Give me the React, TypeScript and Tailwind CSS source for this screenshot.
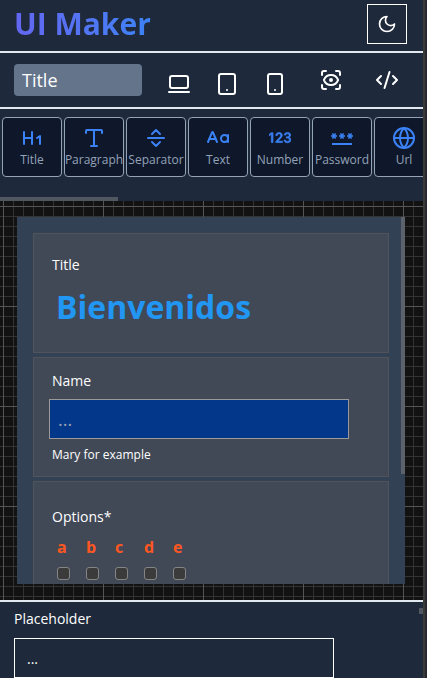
import type { ReactNode } from "react";
import {
  CaseSensitive,
  CodeXml,
  Globe,
  Heading1,
  LaptopMinimal,
  ScanEye,
  Smartphone,
  Tablet,
  Type,
} from "lucide-react";
import { Bs123 } from "react-icons/bs";
import { MdPassword } from "react-icons/md";
import { TbSeparatorHorizontal } from "react-icons/tb";

const tools: { name: string; icon: ReactNode }[] = [
  { name: "Title", icon: <Heading1 size={24} /> },
  { name: "Paragraph", icon: <Type size={24} /> },
  { name: "Separator", icon: <TbSeparatorHorizontal size={24} /> },
  { name: "Text", icon: <CaseSensitive size={24} /> },
  { name: "Number", icon: <Bs123 size={24} className="p-px" strokeWidth={0.5} /> },
  { name: "Password", icon: <MdPassword size={24} /> },
  { name: "Url", icon: <Globe size={24} /> },
];

const options = ["a", "b", "c", "d", "e"];

function Moon() {
  return (
    <svg width="20" height="20" viewBox="0 0 24 24" fill="none" stroke="currentColor" strokeWidth="2" strokeLinecap="round" strokeLinejoin="round">
      <path d="M12 3a6 6 0 0 0 9 9 9 9 0 1 1-9-9Z" />
    </svg>
  );
}

function Card({ children }: { children: ReactNode }) {
  return (
    <section className="h-[120px] shrink-0 border border-[#50525c] bg-[#414856] px-[15px] pt-[11px]">
      {children}
    </section>
  );
}

export default function App() {
  return (
    <div className="flex h-screen bg-[#2a2730] font-['Open_Sans','Noto_Sans',sans-serif] text-white">
      <div className="mr-0.5 flex min-w-0 flex-1 flex-col border-r-2 border-[#3a3a38] bg-[#1e293b]">
        <header className="flex h-[53px] shrink-0 items-start justify-between border-b-2 border-[#e2e8f0] pr-4 pl-3.5">
          <h1 className="bg-linear-to-r from-[#6366f1] to-[#3b82f6] bg-clip-text pt-1 text-3xl leading-10 font-bold text-transparent">
            UI Maker
          </h1>
          <button aria-label="Dark mode" className="mt-1 flex size-10 items-center justify-center border border-white">
            <Moon />
          </button>
        </header>

        <div className="flex h-14 shrink-0 items-center border-b-2 border-[#e2e8f0] pl-3.5">
          <input
            aria-label="Form name"
            defaultValue="Title"
            className="h-8 w-32 rounded-sm bg-[#64748b] px-2 text-lg leading-7 text-white"
          />
          <div className="ml-[25px] flex gap-6 pt-2">
            <button aria-label="Laptop"><LaptopMinimal size={24} /></button>
            <button aria-label="Tablet"><Tablet size={24} /></button>
            <button aria-label="Phone"><Smartphone size={24} /></button>
          </div>
          <div className="ml-8 flex gap-8">
            <button aria-label="Preview"><ScanEye size={24} /></button>
            <button aria-label="Code"><CodeXml size={24} /></button>
          </div>
        </div>

        <nav className="relative flex h-[92px] shrink-0 items-start gap-0.5 overflow-hidden pt-2 pl-0.5">
          {tools.map((tool) => (
            <button
              key={tool.name}
              className="flex size-[60px] shrink-0 flex-col items-center justify-center rounded-sm border border-[#94a3b8] bg-[#0f172a] pt-0.5 text-xs leading-5 text-[#94a3b8]"
            >
              <span className="text-[#3b82f6]">{tool.icon}</span>
              {tool.name}
            </button>
          ))}
          <div className="absolute bottom-0 left-0 h-1 w-[118px] bg-[#505761]" />
        </nav>

        <main className="relative flex min-h-0 flex-1 bg-[#121212] py-4 pr-[18px] pl-[17px]">
          <svg className="absolute inset-0 size-full" aria-hidden="true">
            <defs>
              <pattern id="minor" width="10" height="10" x="3" y="5" patternUnits="userSpaceOnUse">
                <path d="M0 0h10v1H1v9H0z" fill="#333333" />
              </pattern>
              <pattern id="major" width="100" height="100" x="3" y="5" patternUnits="userSpaceOnUse">
                <path d="M0 0h100v1H1v99H0z" fill="#555555" />
              </pattern>
            </defs>
            <rect width="100%" height="100%" fill="url(#minor)" />
            <rect width="100%" height="100%" fill="url(#major)" />
          </svg>
          <div className="relative flex min-w-0 flex-1 flex-col gap-1 overflow-hidden bg-[#334155] p-4">
            <Card>
              <p className="pt-2 pl-[3px] text-sm leading-6">Title</p>
              <h2 className="mt-2 pl-[7px] text-[32px] leading-[44px] font-bold text-[#2196f3]">Bienvenidos</h2>
            </Card>
            <Card>
              <label htmlFor="name" className="block h-[30px] pl-[3px] text-sm leading-6">
                Name
              </label>
              <input
                id="name"
                placeholder="..."
                className="block h-10 w-[300px] border border-[#999999] bg-[#02378a] px-2 text-lg text-white placeholder:text-[#9ca3af]"
              />
              <p className="pt-1 pl-[3px] text-xs leading-6">Mary for example</p>
            </Card>
            <Card>
              <p className="pt-3 pl-[3px] text-sm leading-6">Options*</p>
              <div className="mt-2 flex gap-4 pl-2">
                {options.map((option) => (
                  <label key={option} className="flex w-[13px] flex-col gap-2.5 font-bold text-[#ff5722]">
                    <span className="leading-5">{option}</span>
                    <input
                      type="checkbox"
                      className="size-[13px] appearance-none rounded-[3px] border border-[#858585] bg-[#3b3b3b]"
                    />
                  </label>
                ))}
              </div>
            </Card>
            <div className="absolute top-0 right-0 h-[257px] w-1 bg-[#5b626b]" />
          </div>
        </main>

        <aside className="relative h-[78px] shrink-0 overflow-hidden border-t-2 border-[#e2e8f0] px-3.5 pt-1">
          <label htmlFor="placeholder" className="block h-8 text-sm leading-[26px]">
            Placeholder
          </label>
          <input
            id="placeholder"
            defaultValue="..."
            className="block h-10 w-80 border border-white bg-transparent px-3 text-sm text-white"
          />
          <div className="absolute top-1.5 right-0 h-1.5 w-1 bg-[#505761]" />
        </aside>
      </div>
    </div>
  );
}
